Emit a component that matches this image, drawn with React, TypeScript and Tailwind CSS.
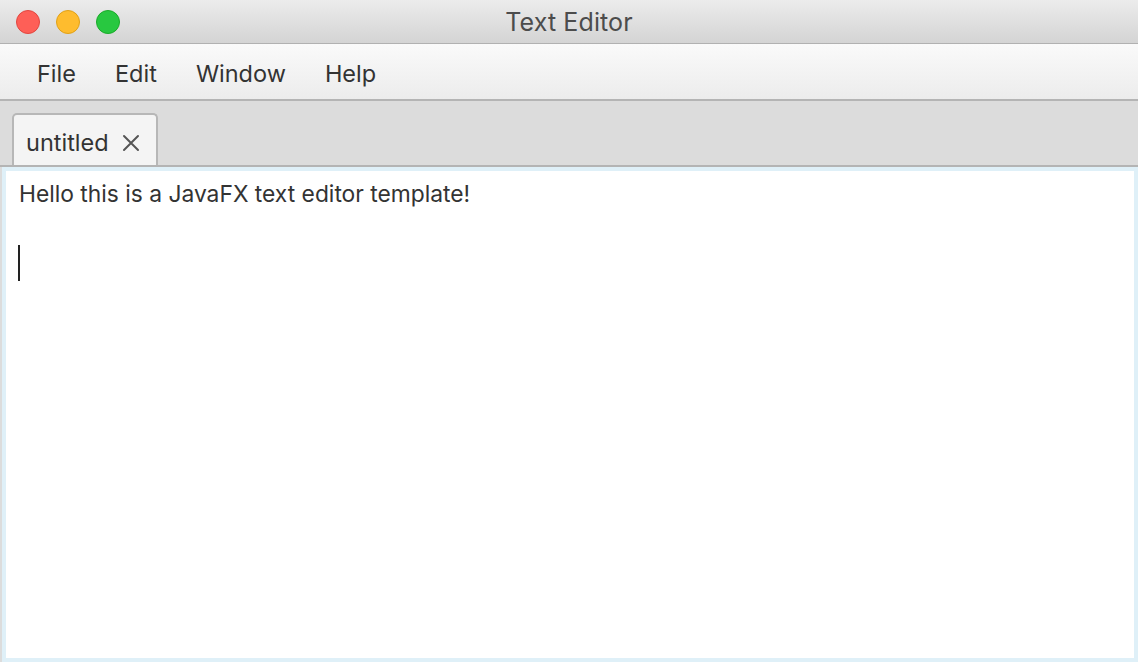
const menus = ["File", "Edit", "Window", "Help"]

export default function App() {
  return (
    <div className="flex h-[662px] w-[1138px] flex-col overflow-hidden bg-[#dcdcdc] font-['Inter','Noto_Sans',sans-serif] text-[#333333]">
      {/* title bar */}
      <div className="relative flex h-[44px] shrink-0 items-center justify-center border-b border-[#b1b1b1] bg-gradient-to-b from-[#ececec] to-[#d4d4d4]">
        <div className="absolute left-[16px] top-[10px] flex gap-[16px]">
          <span className="h-[24px] w-[24px] rounded-full border border-[#e2463f] bg-[#fe5f57]" />
          <span className="h-[24px] w-[24px] rounded-full border border-[#e1a116] bg-[#febc2e]" />
          <span className="h-[24px] w-[24px] rounded-full border border-[#1aab29] bg-[#28c840]" />
        </div>
        <span className="pt-[2px] text-[25px] leading-none tracking-[0.1px] text-[#4c4c4c]">Text Editor</span>
      </div>

      {/* menu bar */}
      <div className="flex h-[57px] shrink-0 items-center gap-[39px] border-b-2 border-[#b4b4b4] bg-gradient-to-b from-[#fafafa] to-[#ececec] pl-[37px] pt-[4px] text-[23.5px]">
        {menus.map((m) => (
          <span key={m}>{m}</span>
        ))}
      </div>

      {/* tabs */}
      <div className="flex h-[66px] shrink-0 items-end border-b-2 border-[#b4b4b4] bg-[#dcdcdc] pl-[12px]">
        <div className="flex h-[52px] items-center gap-[13px] rounded-t-[5px] border-2 border-b-0 border-[#b7b7b7] bg-[#f4f4f4] pl-[12px] pr-[16px] pt-[6px] text-[23.5px]">
          <span>untitled</span>
          <svg width="18" height="18" viewBox="0 0 18 18" className="text-[#555555]">
            <path d="M2 2L16 16M16 2L2 16" stroke="currentColor" strokeWidth="2" strokeLinecap="round" />
          </svg>
        </div>
      </div>

      {/* editor */}
      <div className="ml-[2px] flex min-h-0 flex-1 flex-col border-4 border-[#dff0f8] bg-white px-[13px] pt-[5px]">
        <p className="text-[22.8px] leading-[36px]">Hello this is a JavaFX text editor template!</p>
        <div className="mt-[33px] h-[36px] w-[2px] -translate-x-[1px] bg-[#222222]" />
      </div>
    </div>
  )
}
